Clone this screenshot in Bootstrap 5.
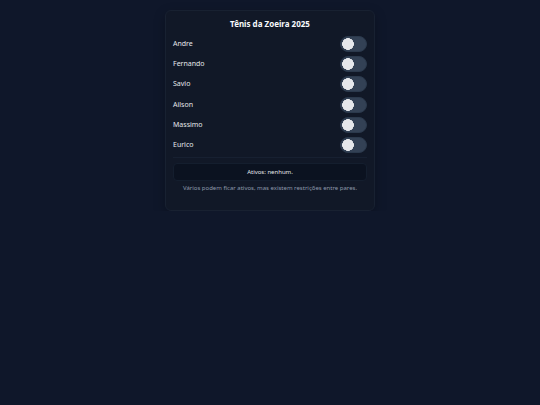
<!DOCTYPE html>
<html lang="pt-BR">
<head>
<meta charset="utf-8">
<meta name="viewport" content="width=device-width, initial-scale=1">
<title>Tênis da Zoeira 2025</title>
<link href="https://cdn.jsdelivr.net/npm/bootstrap@5.3.0/dist/css/bootstrap.min.css" rel="stylesheet">
<style>
body { background: #0f172a; color: #e5e7eb; font-family: "Noto Sans", sans-serif; font-size: 7px; line-height: 10px; }
.panel { --bs-card-bg: #111827; --bs-card-color: #dcdfe4; --bs-card-border-color: #182131; --bs-card-border-radius: 6px; max-width: 210px; margin-top: 10px; padding: 7px 7px 17px; box-shadow: 0 4px 12px rgba(0, 0, 0, .25); }
.panel-title { font-size: 8px; line-height: 12px; font-weight: 700; color: #f8fafc; margin-bottom: 6px; }
.players { min-height: 122px; padding-bottom: 4px; border-bottom: 1px solid #172031; margin-bottom: 5px; }
.player { min-height: 16px; }
.player .toggle { width: 27px; height: 16px; margin: 0; border: 1px solid #2b394c; border-radius: 8px; background-color: #334155; background-image: radial-gradient(circle closest-side, #e5e7eb 94%, transparent); background-size: 12px 12px; background-position: 1px 1px; cursor: pointer; }
.player .toggle:checked { background-color: #22c55e; background-position: right 1px top 1px; }
.status { background: #0b1220; border: 1px solid #141e2e; border-radius: 4px; padding: 3px; margin-bottom: 2px; font-size: 6px; }
.hint { font-size: 6px; color: #8e99ab; }
</style>
</head>
<body>
<main class="container d-flex justify-content-center">
  <section class="card panel w-100">
    <h1 class="panel-title text-center">Tênis da Zoeira 2025</h1>
    <div class="players d-flex flex-column justify-content-between">
      <div class="player d-flex align-items-center justify-content-between form-switch p-0"><label for="andre">Andre</label><input class="form-check-input toggle" type="checkbox" role="switch" id="andre"></div>
      <div class="player d-flex align-items-center justify-content-between form-switch p-0"><label for="fernando">Fernando</label><input class="form-check-input toggle" type="checkbox" role="switch" id="fernando"></div>
      <div class="player d-flex align-items-center justify-content-between form-switch p-0"><label for="savio">Savio</label><input class="form-check-input toggle" type="checkbox" role="switch" id="savio"></div>
      <div class="player d-flex align-items-center justify-content-between form-switch p-0"><label for="ailson">Ailson</label><input class="form-check-input toggle" type="checkbox" role="switch" id="ailson"></div>
      <div class="player d-flex align-items-center justify-content-between form-switch p-0"><label for="massimo">Massimo</label><input class="form-check-input toggle" type="checkbox" role="switch" id="massimo"></div>
      <div class="player d-flex align-items-center justify-content-between form-switch p-0"><label for="eurico">Eurico</label><input class="form-check-input toggle" type="checkbox" role="switch" id="eurico"></div>
    </div>
    <div class="status text-center" role="status">Ativos: nenhum.</div>
    <p class="hint text-center mb-0">Vários podem ficar ativos, mas existem restrições entre pares.</p>
  </section>
</main>
<script src="https://cdn.jsdelivr.net/npm/bootstrap@5.3.0/dist/js/bootstrap.bundle.min.js"></script>
</body>
</html>
